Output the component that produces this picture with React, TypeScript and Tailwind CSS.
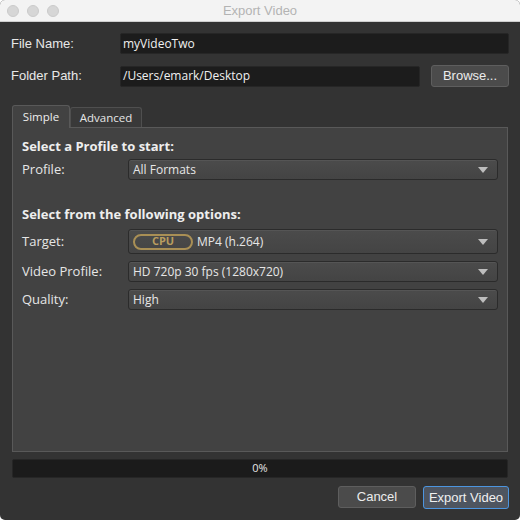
import React from 'react';

const Caret = () => (
  <svg width="10" height="6" viewBox="0 0 10 6" className="shrink-0">
    <path d="M0 0 L10 0 L5 6 Z" fill="#bdbdbd" />
  </svg>
);

const Select: React.FC<{ children: React.ReactNode; tall?: boolean }> = ({ children, tall }) => (
  <div
    className={`flex-1 flex items-center justify-between pl-[4px] pr-[9px] rounded-[3px] border border-[#2b2b2b] bg-gradient-to-b from-[#4b4b4b] to-[#444444] shadow-[inset_0_1px_0_#555] text-[12px] text-[#e6e6e6] ${tall ? 'h-[25px]' : 'h-[21px]'}`}
  >
    <div className="flex items-center">{children}</div>
    <Caret />
  </div>
);

export default function App() {
  const ui = { fontFamily: '"Liberation Sans", Arial, sans-serif' };
  const pane = { fontFamily: '"Open Sans", "Noto Sans", sans-serif' };

  return (
    <div className="w-[520px] h-[520px] bg-white" style={ui}>
      <div className="w-full h-full flex flex-col rounded-[5px] overflow-hidden bg-[#333333]">
        {/* Title bar */}
        <div className="h-[22px] bg-[#f3f3f3] border-b border-[#cfcfcf] flex items-center relative shrink-0">
          <div className="flex gap-[8px] pl-[7px]">
            <div className="w-[12px] h-[12px] rounded-full bg-[#d6d6d6] border border-[#cacaca]" />
            <div className="w-[12px] h-[12px] rounded-full bg-[#d6d6d6] border border-[#cacaca]" />
            <div className="w-[12px] h-[12px] rounded-full bg-[#d6d6d6] border border-[#cacaca]" />
          </div>
          <div className="absolute inset-0 flex items-center justify-center text-[13px] text-[#b3b3b3]">Export Video</div>
        </div>

        <div className="flex-1 flex flex-col px-[11px] pb-[11px]">
          {/* File name */}
          <div className="flex items-center mt-[11px] h-[21px]">
            <div className="w-[109px] text-[13px] text-[#e8e8e8]">File Name:</div>
            <div className="flex-1 h-[21px] bg-[#1c1c1c] rounded-[2px] border border-[#262626] flex items-center px-[2px] text-[12px] text-[#f0f0f0]" style={pane}>
              myVideoTwo
            </div>
          </div>

          {/* Folder path */}
          <div className="flex items-center mt-[11px] h-[22px]">
            <div className="w-[109px] text-[13px] text-[#e8e8e8]">Folder Path:</div>
            <div className="flex-1 h-[21px] bg-[#1c1c1c] rounded-[2px] border border-[#262626] flex items-center px-[2px] text-[12px] text-[#f0f0f0]" style={pane}>
              /Users/emark/Desktop
            </div>
            <div className="ml-[11px] w-[78px] h-[22px] rounded-[3px] bg-[#4b4b4b] border border-[#5e5e5e] flex items-center justify-center text-[13px] text-[#ececec]">
              Browse...
            </div>
          </div>

          {/* Tabs */}
          <div className="mt-[18px] mx-[1px] flex-1 flex flex-col" style={pane}>
            <div className="flex items-end h-[22px]">
              <div className="w-[58px] h-[23px] -mb-px relative z-10 bg-[#424242] border border-[#595959] border-b-0 rounded-t-[3px] flex items-center justify-center text-[11.5px] text-[#eeeeee]">
                Simple
              </div>
              <div className="w-[72px] h-[20px] bg-[#393939] border border-[#4f4f4f] border-b-0 rounded-t-[3px] flex items-center justify-center text-[11.5px] text-[#e6e6e6]">
                Advanced
              </div>
            </div>
            <div className="flex-1 bg-[#424242] border border-[#595959] px-[9px] pt-[9px] text-[#e6e6e6]">
              <div className="font-bold text-[13px] leading-[18px] text-[#eeeeee]">Select a Profile to start:</div>
              <div className="flex items-center mt-[4px]">
                <div className="w-[106px] text-[13px]">Profile:</div>
                <Select>All Formats</Select>
              </div>

              <div className="font-bold text-[13px] leading-[18px] text-[#eeeeee] mt-[25px]">Select from the following options:</div>
              <div className="flex items-center mt-[6px]">
                <div className="w-[106px] text-[13px]">Target:</div>
                <Select tall>
                  <span className="w-[60px] h-[16px] rounded-full border-[2px] border-[#a98f55] flex items-center justify-center text-[11px] font-bold text-[#b99d5f] mr-[4px]">
                    CPU
                  </span>
                  MP4 (h.264)
                </Select>
              </div>
              <div className="flex items-center mt-[7px]">
                <div className="w-[106px] text-[13px]">Video Profile:</div>
                <Select>HD 720p 30 fps (1280x720)</Select>
              </div>
              <div className="flex items-center mt-[7px]">
                <div className="w-[106px] text-[13px]">Quality:</div>
                <Select>High</Select>
              </div>
            </div>
          </div>

          {/* Progress */}
          <div className="mt-[7px] mx-[1px] h-[19px] bg-[#1b1b1b] rounded-[2px] border border-[#262626] flex items-center justify-center text-[11px] text-[#e6e6e6]" style={pane}>
            0%
          </div>

          {/* Buttons */}
          <div className="mt-[8px] flex justify-end gap-[7px]">
            <div className="w-[78px] h-[22px] rounded-[3px] bg-[#4b4b4b] border border-[#5e5e5e] flex items-center justify-center text-[13px] text-[#ececec]">
              Cancel
            </div>
            <div className="w-[86px] h-[23px] rounded-[3px] bg-[#4e5560] border border-[#4c95e0] flex items-center justify-center text-[13px] text-[#f0f0f0]">
              Export Video
            </div>
          </div>
        </div>
      </div>
    </div>
  );
}
